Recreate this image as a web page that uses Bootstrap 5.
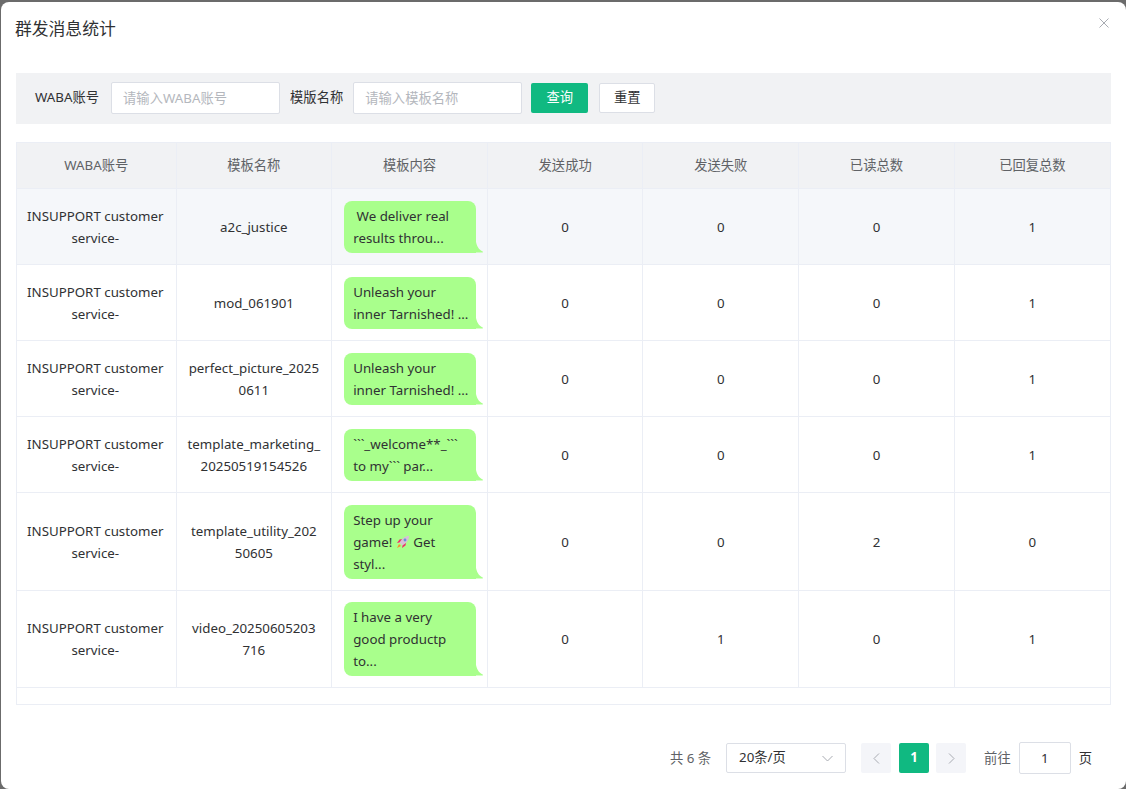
<!DOCTYPE html>
<html lang="zh">
<head>
    <meta charset="UTF-8">
    <title>群发消息统计</title>
    <link href="https://cdn.jsdelivr.net/npm/bootstrap@5.3.0/dist/css/bootstrap.min.css" rel="stylesheet">
    <style>
        html, body {
            height: 100%;
        }
        body {
            margin: 0;
            background: #6b6b6b;
            overflow: hidden;
            font-family: "Noto Sans", "Noto Sans CJK SC", sans-serif;
            font-size: 13.3px;
            color: #303133;
        }
        .dialog-box {
            height: 787px;
            margin-top: 2px;
            margin-left: 1px;
            background: #fff;
            border-radius: 8px;
            padding: 0 15px 0 15px;
        }
        .dialog-head {
            height: 71px;
            padding-top: 15px;
        }
        .dialog-title {
            font-size: 16.8px;
            line-height: 24px;
            color: #303133;
            margin-left: -1px;
        }
        .close-x {
            width: 10px;
            height: 10px;
            margin-top: 1px;
            margin-right: 2px;
        }
        .search-bar {
            height: 51px;
            background: #f1f2f4;
            padding-left: 19px;
            padding-bottom: 1px;
        }
        .search-label {
            color: #303133;
            margin-right: 10px;
        }
        .search-label:first-child {
            margin-right: 12px;
        }
        .search-input {
            width: 169px;
            height: 32px;
            border: 1px solid #dcdfe6;
            border-radius: 2px;
            padding: 0 11px;
            margin-right: 10px;
            font-size: 13.3px;
            font-family: inherit;
            background: #fff;
        }
        .search-input::placeholder {
            color: #b4b7bd;
        }
        .btn-query {
            width: 57px;
            height: 30px;
            background: #10b981;
            color: #fff;
            border: 0;
            border-radius: 2px;
            font-size: 13.3px;
            padding: 0;
            margin-left: -1px;
            margin-right: 11px;
        }
        .btn-reset {
            width: 56px;
            height: 30px;
            background: #fff;
            color: #303133;
            border: 1px solid #dcdfe6;
            border-radius: 2px;
            font-size: 13.3px;
            padding: 0;
        }
        .table-wrap {
            margin-top: 18px;
            border: 1px solid #ebeef5;
            height: 563px;
        }
        .stat-table {
            width: 100%;
            table-layout: fixed;
            border-collapse: collapse;
            margin: 0;
        }
        .stat-table th, .stat-table td {
            border: 1px solid #ebeef5;
            text-align: center;
            vertical-align: middle;
            line-height: 22px;
            padding: 12px 12px 11px;
            font-weight: 400;
        }
        .stat-table tr > :first-child { border-left: 0; }
        .stat-table tr > :last-child { border-right: 0; }
        .stat-table thead tr:first-child th { border-top: 0; }
        .stat-table th {
            height: 45px;
            padding: 0 12px;
            background: #f1f2f4;
            color: #606266;
        }
        .stat-table th:first-child {
            width: 159px;
        }
        .stat-table td {
            color: #303133;
        }
        .stat-table tbody tr:last-child td {
            padding-top: 11px;
        }
        .stat-table tr.row-hover td {
            background: #f5f7fa;
        }
        .stat-table td.account-cell {
            padding-left: 8px;
            padding-right: 10px;
        }
        .stat-table td.name-cell {
            padding-left: 8px;
            padding-right: 8px;
        }
        .bubble {
            position: relative;
            margin-right: -1px;
            background: #a9ff8c;
            border-radius: 8px 8px 0 8px;
            padding: 4px 9px;
            text-align: left;
            color: #303133;
            white-space: nowrap;
        }
        .bubble::after {
            content: "";
            position: absolute;
            right: -7px;
            bottom: 0;
            width: 7px;
            height: 12px;
            background: #a9ff8c;
            clip-path: path("M0 0 C.5 5 3 9.500 7 11 L7 12 L0 12 Z");
        }
        .emoji-icon {
            width: 14px;
            height: 14px;
            vertical-align: -2px;
        }
        .pager-row {
            height: 106px;
            padding-right: 19px;
        }
        .pager-total {
            color: #606266;
            margin-top: 2px;
            margin-right: 15px;
        }
        .pager-size {
            width: 120px;
            height: 30px;
            border: 1px solid #dcdfe6;
            border-radius: 2px;
            padding: 0 12px;
            margin-right: 15px;
            color: #303133;
        }
        .pager-btn {
            width: 30px;
            height: 30px;
            border-radius: 2px;
            background: #f4f5f9;
            border: 0;
            padding: 0;
        }
        .pager-btn.active-page {
            background: #10b981;
            color: #fff;
            font-weight: 700;
            margin: 0 7px 0 8px;
        }
        .pager-jump {
            color: #606266;
            margin-top: 2px;
            margin-left: 18px;
        }
        .pager-end {
            margin-top: 2px;
        }
        .jump-input {
            width: 52px;
            height: 32px;
            border: 1px solid #dcdfe6;
            border-radius: 2px;
            text-align: center;
            margin: 0 8px;
            font-size: 13.3px;
            font-family: inherit;
            color: #303133;
        }
    </style>
</head>
<body>
    <div class="dialog-box">
        <div class="dialog-head d-flex justify-content-between align-items-start">
            <div class="dialog-title">群发消息统计</div>
            <svg class="close-x" viewBox="0 0 10 10"><path d="M.5.5l9 9M9.5.5l-9 9" stroke="#a8abb2" fill="none"/></svg>
        </div>

        <div class="search-bar d-flex align-items-center">
            <span class="search-label">WABA账号</span>
            <input class="search-input" placeholder="请输入WABA账号">
            <span class="search-label">模版名称</span>
            <input class="search-input" placeholder="请输入模板名称">
            <button class="btn-query">查询</button>
            <button class="btn-reset">重置</button>
        </div>

        <div class="table-wrap">
            <table class="stat-table">
                <thead>
                    <tr>
                        <th>WABA账号</th><th>模板名称</th><th>模板内容</th><th>发送成功</th><th>发送失败</th><th>已读总数</th><th>已回复总数</th>
                    </tr>
                </thead>
                <tbody>
                    <tr class="row-hover">
                        <td class="account-cell">INSUPPORT customer service-</td>
                        <td class="name-cell">a2c_justice</td>
                        <td><div class="bubble">&nbsp;We deliver real<br>results throu...</div></td>
                        <td>0</td><td>0</td><td>0</td><td>1</td>
                    </tr>
                    <tr>
                        <td class="account-cell">INSUPPORT customer service-</td>
                        <td class="name-cell">mod_061901</td>
                        <td><div class="bubble">Unleash your<br>inner Tarnished! ...</div></td>
                        <td>0</td><td>0</td><td>0</td><td>1</td>
                    </tr>
                    <tr>
                        <td class="account-cell">INSUPPORT customer service-</td>
                        <td class="name-cell">perfect_picture_2025<br>0611</td>
                        <td><div class="bubble">Unleash your<br>inner Tarnished! ...</div></td>
                        <td>0</td><td>0</td><td>0</td><td>1</td>
                    </tr>
                    <tr>
                        <td class="account-cell">INSUPPORT customer service-</td>
                        <td class="name-cell">template_marketing_<br>20250519154526</td>
                        <td><div class="bubble">```_welcome**_```<br>to my``` par...</div></td>
                        <td>0</td><td>0</td><td>0</td><td>1</td>
                    </tr>
                    <tr>
                        <td class="account-cell">INSUPPORT customer service-</td>
                        <td class="name-cell">template_utility_202<br>50605</td>
                        <td><div class="bubble">Step up your<br>game! <svg class="emoji-icon" viewBox="0 0 14 14"><path d="M13 1C9 1 6 3.500 3.500 7.500l3 3C10.500 8 13 5 13 1z" fill="#d9bfd8"/><path d="M3.500 7.500L1 8l2.500-3.500 2.500-.5zM6.500 10.500L6 13l3.500-2.500.5-2.500z" fill="#f0306e"/><circle cx="9" cy="5" r="1.400" fill="#5f94d8"/><path d="M3 9l-2 4 4-2z" fill="#f7902f"/></svg> Get<br>styl...</div></td>
                        <td>0</td><td>0</td><td>2</td><td>0</td>
                    </tr>
                    <tr>
                        <td class="account-cell">INSUPPORT customer service-</td>
                        <td class="name-cell">video_20250605203<br>716</td>
                        <td><div class="bubble">I have a very<br>good productp<br>to...</div></td>
                        <td>0</td><td>1</td><td>0</td><td>1</td>
                    </tr>
                </tbody>
            </table>
        </div>

        <div class="pager-row d-flex align-items-center justify-content-end">
            <span class="pager-total">共 6 条</span>
            <div class="pager-size d-flex align-items-center justify-content-between">
                <span>20条/页</span>
                <svg width="11" height="7" viewBox="0 0 11 7"><path d="M.5 1l5 5 5-5" stroke="#a8abb2" fill="none"/></svg>
            </div>
            <button class="pager-btn"><svg width="7" height="11" viewBox="0 0 7 11"><path d="M6 .5l-5 5 5 5" stroke="#a8abb2" fill="none"/></svg></button>
            <button class="pager-btn active-page">1</button>
            <button class="pager-btn"><svg width="7" height="11" viewBox="0 0 7 11"><path d="M1 .5l5 5-5 5" stroke="#a8abb2" fill="none"/></svg></button>
            <span class="pager-jump">前往</span>
            <input class="jump-input" value="1">
            <span class="pager-end">页</span>
        </div>
    </div>
</body>
</html>
